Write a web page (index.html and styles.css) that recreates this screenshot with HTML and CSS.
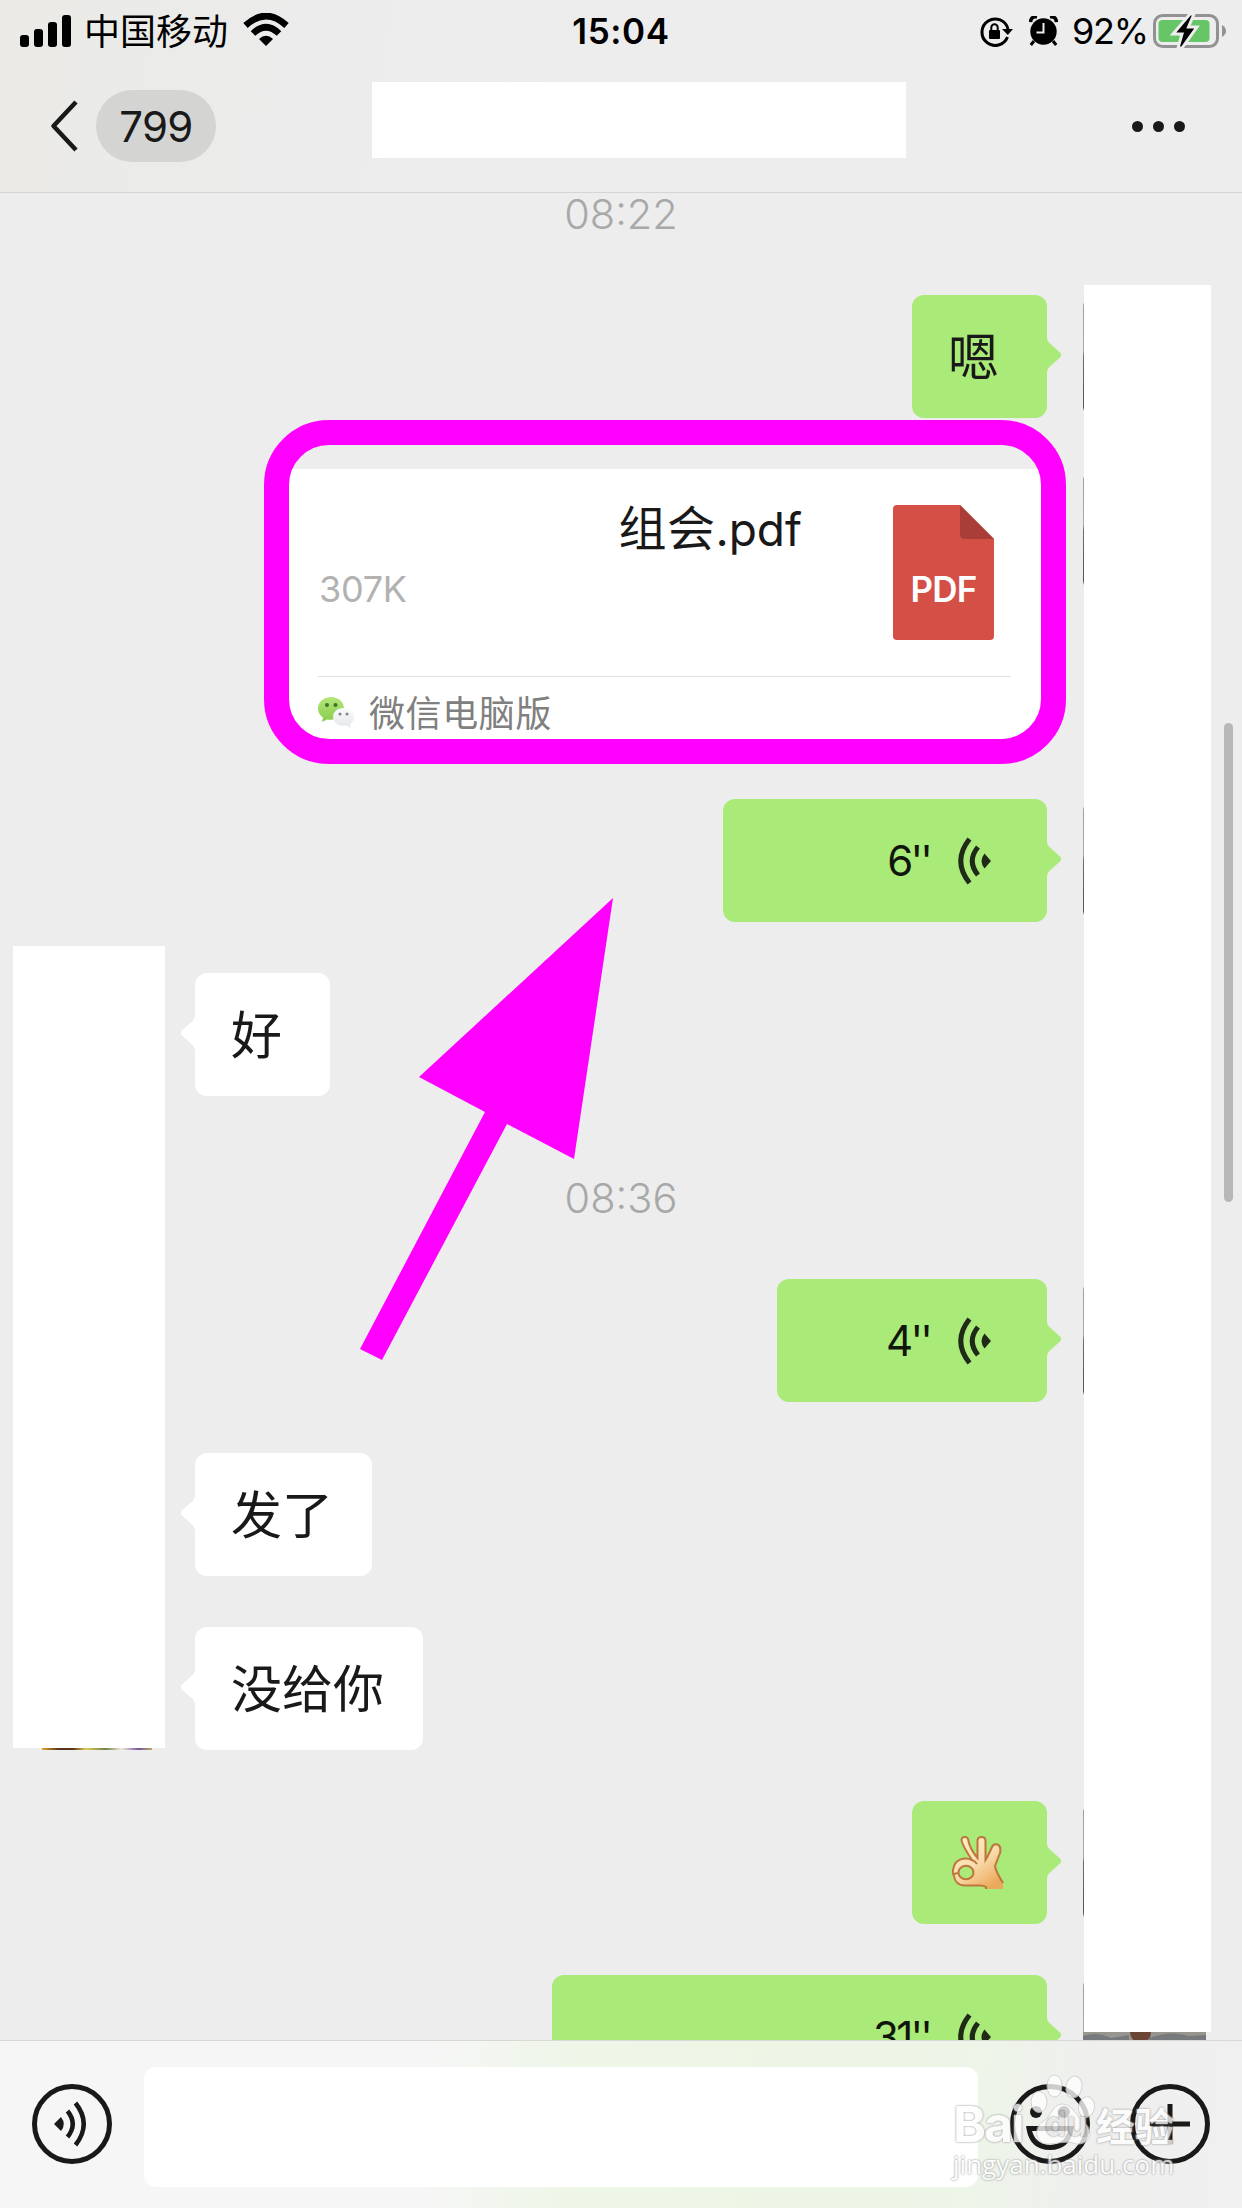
FILE: index.html
```html
<!DOCTYPE html>
<html lang="zh-CN">
<head>
<meta charset="utf-8">
<title>聊天</title>
<link rel="stylesheet" href="styles.css">
</head>
<body>
<svg class="defs" width="0" height="0" aria-hidden="true">
  <symbol id="voice" viewBox="0 0 33 48">
    <g fill="none" stroke="currentColor" stroke-width="5"><path d="M11.5 2Q-6 24 11.5 46"/><path d="M20 10Q8.500 24 20 38"/></g>
    <path d="M26.500 16.500L33 24L26.500 31.500Q20.500 24 26.500 16.500Z" fill="currentColor"/>
  </symbol>
</svg>
<div class="phone">
  <header class="top">
    <div class="status">
      <div class="status-left">
        <svg width="52" height="32" viewBox="0 0 52 32"><rect x="0" y="20" width="9" height="12" rx="3"/><rect x="14" y="14" width="9" height="18" rx="3"/><rect x="28" y="7" width="9" height="25" rx="3"/><rect x="42" y="0" width="9" height="32" rx="3"/></svg>
        <span class="carrier">中国移动</span>
        <svg class="wifi" width="46" height="34" viewBox="0 0 46 34"><g fill="none" stroke="#000" stroke-width="6.500"><path d="M2.500 12.500Q23-6.500 43.500 12.500"/><path d="M10 20.500Q23 8 36 20.500"/></g><path d="M16 26Q23 19.500 30 26L23 33Z"/></svg>
      </div>
      <div class="clock">15:04</div>
      <div class="status-right">
        <svg width="34" height="32" viewBox="0 0 34 32"><path d="M28.500 21A13.200 13.200 0 1 1 29 13" fill="none" stroke="#000" stroke-width="3"/><path d="M23 13H34L28.800 19Z"/><rect x="10" y="14" width="11" height="9" rx="1"/><path d="M12.300 15V11.500A3.200 3.200 0 0 1 18.700 11.500V15" fill="none" stroke="#000" stroke-width="2"/></svg>
        <svg class="alarm" width="29" height="30" viewBox="0 0 29 30"><circle cx="14.500" cy="15.500" r="13.200"/><path d="M1.500 6Q2 0 8 1M27.500 6Q27 0 21 1" fill="none" stroke="#000" stroke-width="3.500"/><path d="M5 25L1.800 29M24 25L27.200 29" stroke="#000" stroke-width="3"/><path d="M14.500 7V16.500H7.500" fill="none" stroke="#eee" stroke-width="2"/></svg>
        <span class="percent">92%</span>
        <svg class="battery" width="74" height="36" viewBox="0 0 74 36"><rect x="1.500" y="2.500" width="63" height="31" rx="8" fill="none" stroke="#929292" stroke-width="3"/><rect x="5.500" y="7" width="51" height="22" rx="4" fill="#66c667"/><path d="M69 12Q73 14.500 73 18T69 24Z" fill="#929292"/><path d="M37 1L20 21H29L25 35L29 35L44 14H35.500L41 1Z" fill="#000" stroke="#ededed" stroke-width="3"/></svg>
      </div>
    </div>
    <nav class="nav">
      <div class="nav-left">
        <svg width="28" height="52" viewBox="0 0 28 52"><path d="M26 2L3.500 26L26 50" fill="none" stroke="#191919" stroke-width="4.500" stroke-linejoin="round"/></svg>
        <span class="unread">799</span>
      </div>
      <div class="title"></div>
      <div class="more"><i></i><i></i><i></i></div>
    </nav>
  </header>

  <main class="chat">
    <div class="time">08:22</div>
    <div class="row me"><div class="bubble">嗯</div><div class="avatar"></div></div>
    <div class="row me">
      <div class="file">
        <div class="file-body">
          <div class="file-text"><div class="file-name">组会<span class="ext">.pdf</span></div><div class="file-size">307K</div></div>
          <div class="pdf">
            <svg width="101" height="135" viewBox="0 0 101 135"><path d="M4 0H67L101 34V131Q101 135 97 135H4Q0 135 0 131V4Q0 0 4 0Z" fill="#d44f46"/><path d="M67 0L101 34H72Q67 34 67 29Z" fill="#a93e38"/></svg>
            <span>PDF</span>
          </div>
        </div>
        <div class="file-source">
          <svg width="37" height="33" viewBox="0 0 37 33"><defs><linearGradient id="wg" x2="0" y2="1"><stop stop-color="#b4e77b"/><stop offset="1" stop-color="#88cb4b"/></linearGradient><linearGradient id="ww" x2="0" y2="1"><stop stop-color="#fafbfc"/><stop offset="1" stop-color="#e4e6e9"/></linearGradient></defs><path d="M13 1C5.500 1 0 6 0 12.500C0 16.500 2 19.500 5 21.500L4 26L9 23.500C19 25 26 20 26 12.500C26 6 20.500 1 13 1Z" fill="url(#wg)"/><path d="M25.500 12C19.500 12 15 16 15 21C15 27 21 31 29 29.500L33 32L32 28C35 26 36 23.500 36 21C36 16 31.500 12 25.500 12Z" fill="url(#ww)"/><g fill="#43702a"><circle cx="9" cy="9" r="2"/><circle cx="17.500" cy="9" r="2"/></g><g fill="#85888a"><circle cx="22" cy="18" r="1.600"/><circle cx="29" cy="18" r="1.600"/></g></svg>
          <span>微信电脑版</span>
        </div>
      </div>
      <div class="avatar"></div>
    </div>
    <div class="row me"><div class="bubble voice v6"><span>6''</span><svg width="33" height="48"><use href="#voice"/></svg></div><div class="avatar"></div></div>
    <div class="row other"><div class="bubble">好</div></div>
    <div class="time">08:36</div>
    <div class="row me"><div class="bubble voice v4"><span>4''</span><svg width="33" height="48"><use href="#voice"/></svg></div><div class="avatar"></div></div>
    <div class="row other"><div class="bubble">发了</div></div>
    <div class="row other"><div class="bubble">没给你</div></div>
    <div class="row me"><div class="bubble emoji">
      <svg width="52" height="54" viewBox="0 0 52 54"><defs><linearGradient id="skin" x1="0" y1="0" x2=".7" y2="1"><stop stop-color="#fff0cb"/><stop offset=".55" stop-color="#f9ddae"/><stop offset="1" stop-color="#eba95b"/></linearGradient></defs><path d="M34 53V51Q31 49 26 49.500H13Q3 49 2 40Q0 37 1.500 32Q3 24 12 22.500Q16 22 20 24Q10 9 9.500 4Q10 .5 13 1Q16 1 16.500 5Q18 13 25.500 22V4Q26 1 29.500 1Q33.500 1 33.500 5V24Q36 20 40 11Q41.500 7.500 45.500 8.500Q49.500 10 48 17L43 30Q44 36 51 47V53Z" fill="url(#skin)"/><path d="M34 53V51Q31 49 26 49.500H13Q3 49 2 40Q0 37 1.500 32Q3 24 12 22.500Q16 22 20 24Q10 9 9.500 4Q10 .5 13 1Q16 1 16.500 5Q18 13 25.500 22V4Q26 1 29.500 1Q33.500 1 33.500 5V24Q36 20 40 11Q41.500 7.500 45.500 8.500Q49.500 10 48 17L43 30Q44 36 51 47M20 24Q23 25 25 28M2 38L6 37" fill="none" stroke="#bd763c" stroke-width="2"/><ellipse cx="14" cy="36.500" rx="7.500" ry="6.800" fill="#aaea79" stroke="#bd763c" stroke-width="2"/></svg>
    </div><div class="avatar"></div></div>
    <div class="row me"><div class="bubble voice v31"><span>31''</span><svg width="33" height="48"><use href="#voice"/></svg></div><div class="avatar portrait">
      <svg width="123" height="66" viewBox="0 0 123 66"><path d="M0 57H123V66H0Z" fill="#98958f"/><path d="M0 61Q14 56 28 63L46 60V66H0ZM66 63Q88 55 106 61L123 60V66H66Z" fill="#777a7c"/><path d="M47 57H68Q68 63 63 66H51Q47 62 47 57Z" fill="#6b4636"/></svg>
    </div></div>
  </main>

  <footer class="composer">
    <svg class="talk" width="80" height="80" viewBox="0 0 80 80"><circle cx="40" cy="40" r="37.500" fill="none" stroke="#191919" stroke-width="5"/><path d="M22 40L29 33Q34.500 40 29 47Z" fill="#191919"/><path d="M35.500 27Q46 40 35.500 53M43.500 19Q60 40 43.500 61" fill="none" stroke="#191919" stroke-width="4.500"/></svg>
    <div class="input"></div>
    <svg class="face" width="80" height="80" viewBox="0 0 80 80"><g fill="none" stroke="#191919" stroke-width="5"><circle cx="40" cy="40" r="37.500"/><path d="M19 44.500H61Q58 63 40 63.500Q22 63 19 44.500Z"/></g><circle cx="26" cy="28" r="6" fill="#191919"/><circle cx="54" cy="28" r="6" fill="#191919"/></svg>
    <svg class="plus" width="80" height="80" viewBox="0 0 80 80"><g fill="none" stroke="#191919" stroke-width="5"><circle cx="40" cy="40" r="37.500"/><path d="M20 40H60M40 20V60"/></g></svg>
  </footer>

  <div class="patch patch-right"></div>
  <div class="patch patch-left"></div>
  <div class="avatar-edge"></div>
  <div class="scrollbar"></div>
  <div class="highlight"></div>
  <svg class="pointer" width="254" height="463" viewBox="359 897 254 463"><path d="M613 898L419 1077L485 1112L360 1349L382 1360L507 1124L574 1159Z" fill="#f0f"/></svg>
  <div class="watermark">
    <svg class="paw" width="66" height="72" viewBox="0 0 66 72"><g fill="#fff" stroke="#ccc" stroke-width="1"><ellipse cx="9" cy="28" rx="8" ry="10.500"/><ellipse cx="24.500" cy="12" rx="7.500" ry="11"/><ellipse cx="44" cy="13" rx="8" ry="11" transform="rotate(10 44 13)"/><ellipse cx="56.500" cy="33" rx="8" ry="10.500" transform="rotate(10 56 33)"/><path d="M32 30C22 30 22 43 12 48C3 55 6 70 18 70C26 70 38 66 46 70C60 71 64 58 55 49C46 43 43 30 32 30Z"/></g></svg>
    <div class="brand"><span class="bai">Bai</span><span class="du">du</span><span class="jy">经验</span></div>
    <div class="url">jingyan.baidu.com</div>
  </div>
</div>
</body>
</html>
```
FILE: styles.css
```css
* { box-sizing: border-box; }
body { margin: 0; background: #ededed; color: #191919; font-family: Inter, "Noto Sans CJK SC", sans-serif; }
svg { display: block; flex: none; }
.defs { position: absolute; }
.phone { position: relative; width: 1242px; height: 2208px; overflow: hidden; display: flex; flex-direction: column; background: #ededed; }

/* status and navigation bars */
.top { height: 193px; flex: none; border-bottom: 1px solid #d5d5d5; background: linear-gradient(100deg, #ebeae6 0, #ebebea 16%, #ececec 30%, #ededed 60%); }
.status { height: 60px; display: grid; grid-template-columns: 1fr auto 1fr; align-items: center; color: #000; }
.status-left { display: flex; align-items: center; padding-left: 20px; }
.carrier { font-size: 36px; line-height: 56px; padding-bottom: 3px; margin-left: 12px; white-space: nowrap; font-family: "Noto Sans CJK SC", sans-serif; }
.wifi { margin-left: 15px; margin-top: -1px; }
.clock { font-size: 35px; font-weight: 600; line-height: 60px; padding-top: 1px; letter-spacing: .6px; }
.status-right { display: flex; align-items: center; justify-content: flex-end; padding-right: 15px; }
.status-right svg:first-child { margin-top: 3px; }
.alarm { margin-left: 16px; margin-top: 1px; }
.percent { font-size: 36px; line-height: 60px; letter-spacing: -1.2px; margin: 1px 5px 0 14px; }
.nav { display: flex; align-items: center; height: 132px; }
.nav-left { display: flex; align-items: center; gap: 18px; padding-left: 50px; width: 372px; }
.unread { width: 120px; height: 72px; border-radius: 36px; background: #d4d4d3; font-size: 42px; line-height: 74px; text-align: center; letter-spacing: -.7px; }
.title { width: 534px; height: 76px; margin-top: -12px; background: #fff; }
.more { margin-left: auto; padding-right: 57px; display: flex; gap: 10px; }
.more i { width: 11px; height: 11px; border-radius: 50%; background: #191919; }

/* conversation */
.chat { height: 1847px; flex: none; overflow: hidden; display: flex; flex-direction: column; gap: 51px; }
.time { flex: none; height: 42px; line-height: 42px; font-size: 41.500px; text-align: center; color: #a8a8a8; margin: 30px 0 9px; font-weight: 350; }
.time:first-child { margin-top: 0; }
.row { display: flex; flex: none; align-items: flex-start; }
.me { justify-content: flex-end; padding-right: 36px; }
.other { padding-left: 195px; }
.bubble { position: relative; height: 123px; min-width: 135px; border-radius: 12px; padding: 0 39px 0 36px; background: #fff; font-family: "Noto Sans CJK SC", sans-serif; font-size: 51px; line-height: 118px; white-space: nowrap; }
.bubble::after { content: ""; position: absolute; top: 42px; left: -15px; width: 16px; height: 36px; background: inherit; clip-path: path("M16 0L15 0Q15 4 12 6.500L2 15.500Q0 18 2 20.500L12 29.500Q15 32 15 36L16 36Z"); }
.me .bubble { background: #aaea79; padding-right: 48px; }
.me .bubble::after { left: auto; right: -15px; transform: scaleX(-1); }
.avatar { width: 123px; height: 123px; margin-left: 36px; border-radius: 12px; background: linear-gradient(#9a9b9b 0, #b0aaa0 45%, #6b6e68 50%, #555044 100%); }
.portrait { overflow: hidden; }
.me .voice { display: flex; justify-content: flex-end; align-items: center; gap: 28px; padding: 0 56px 0 0; font-family: Inter, sans-serif; font-size: 42px; color: #10160b; letter-spacing: -2.800px; }
.voice svg { color: #202b17; margin-top: 1px; }
.v6 { width: 324px; }
.v4 { width: 270px; }
.v31 { width: 495px; }
.me .emoji { padding: 35px 0 0 40px; }

/* shared document */
.file { width: 765px; height: 279px; border-radius: 12px; background: #fff; padding: 0 36px; }
.file-body { height: 208px; border-bottom: 1px solid #e2e2e2; display: flex; justify-content: space-between; padding: 36px 17px 0 1px; }
.file-text { width: 483px; margin-top: -6px; }
.file-name { text-align: right; font-size: 48px; line-height: 52px; font-family: "Noto Sans CJK SC", sans-serif; letter-spacing: .5px; }
.ext { font-family: Inter, sans-serif; font-size: 46px; letter-spacing: 0; }
.file-size { font-size: 36px; line-height: 40px; margin-top: 14px; color: #b2b2b2; letter-spacing: -.3px; }
.pdf { position: relative; width: 101px; height: 135px; }
.pdf span { position: absolute; left: 0; right: 0; top: 63px; text-align: center; color: #fff; font-size: 35px; line-height: 42px; font-weight: 600; letter-spacing: -.8px; }
.file-source { display: flex; align-items: center; gap: 14px; height: 70px; color: #808080; font-family: "Noto Sans CJK SC", sans-serif; font-size: 36px; letter-spacing: .6px; }
.file-source span { line-height: 40px; padding-bottom: 2px; }

/* message composer */
.composer { height: 168px; flex: none; border-top: 1px solid #d8d8d6; display: flex; align-items: center; padding-left: 32px; background: linear-gradient(95deg, #f6f6f6 0 34%, #eef6e8 46%, #edf5e5 60%, #edf5e8 77%, #efefee 88%, #f0f0f0); }
.composer svg { margin-top: -1px; }
.input { width: 834px; height: 120px; margin: 4px 32px 0; border-radius: 12px; background: #fff; }
.plus { margin-left: 40px; }

/* overlays */
.patch { position: absolute; background: #fff; }
.patch-right { left: 1084px; top: 285px; width: 127px; height: 1747px; }
.patch-left { left: 13px; top: 946px; width: 152px; height: 802px; }
.avatar-edge { position: absolute; left: 42px; top: 1748px; width: 110px; height: 2px; background: linear-gradient(90deg, #e0a82f, #5c3518 15% 28%, #e3cd55 40%, #71824b 58%, #f4eada 72%, #7358a0 88%, #bea765); }
.scrollbar { position: absolute; left: 1224px; top: 723px; width: 9px; height: 479px; border-radius: 5px; background: #b8b8b8; }
.highlight { position: absolute; left: 264px; top: 420px; width: 802px; height: 344px; border: 25px solid #f0f; border-radius: 65px; }
.pointer { position: absolute; left: 359px; top: 897px; }
.watermark { position: absolute; left: 953px; top: 2074px; width: 225px; height: 108px; color: #fff; opacity: .78; text-shadow: 0 0 2px #999, 0 0 2px #999; white-space: nowrap; }
.paw { position: absolute; left: 77px; top: 0; }
.brand { position: relative; display: flex; padding-top: 25px; font-weight: 700; line-height: 50px; }
.bai { font-size: 50px; width: 92px; letter-spacing: -2px; }
.du { font-size: 34px; width: 51px; color: #e8e8e8; }
.jy { font-family: "Noto Sans CJK SC", sans-serif; font-weight: 700; font-size: 39px; }
.url { font-family: "Open Sans", sans-serif; font-size: 26px; line-height: 30px; margin-top: 0; }
```
